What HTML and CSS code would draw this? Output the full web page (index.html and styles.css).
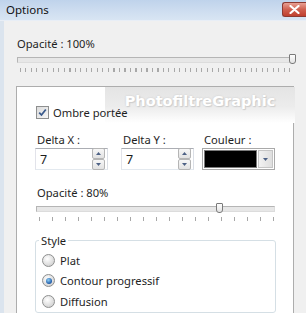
FILE: index.html
```html
<!DOCTYPE html>
<html lang="fr">
<head>
<meta charset="utf-8">
<link rel="stylesheet" href="styles.css">
</head>
<body>
<div class="window">
  <div class="titlebar">
    <span class="title">Options</span>
    <span class="close"><svg width="11" height="9" viewBox="0 0 11 9"><path d="M1.5 1 L9.5 8 M9.5 1 L1.5 8" stroke="#fff" stroke-width="2.2" stroke-linecap="round"/></svg></span>
  </div>
  <div class="client">
    <div class="label">Opacité : 100%</div>
    <div class="slider wide">
      <div class="track"></div>
      <div class="thumb" style="left: 272px"></div>
    </div>
    <div class="ticks fine"></div>

    <div class="panel">
      <div class="watermark">PhotofiltreGraphic</div>
      <label class="check-row">
        <span class="checkbox"><svg width="9" height="9" viewBox="0 0 9 9"><path d="M1.2 4.6 L3.5 7 L7.8 1.5" fill="none" stroke="#3a5a8c" stroke-width="1.8"/></svg></span>
        <span>Ombre portée</span>
      </label>

      <div class="fields">
        <div class="field">
          <div class="flabel">Delta X :</div>
          <div class="spin">
            <span class="val">7</span>
            <span class="spinbtns">
              <span class="sbtn"><svg width="5" height="3" viewBox="0 0 5 3"><path d="M0 3 L2.5 0 L5 3Z" fill="#4d6185"/></svg></span>
              <span class="sbtn"><svg width="5" height="3" viewBox="0 0 5 3"><path d="M0 0 L2.5 3 L5 0Z" fill="#4d6185"/></svg></span>
            </span>
          </div>
        </div>
        <div class="field">
          <div class="flabel">Delta Y :</div>
          <div class="spin">
            <span class="val">7</span>
            <span class="spinbtns">
              <span class="sbtn"><svg width="5" height="3" viewBox="0 0 5 3"><path d="M0 3 L2.5 0 L5 3Z" fill="#4d6185"/></svg></span>
              <span class="sbtn"><svg width="5" height="3" viewBox="0 0 5 3"><path d="M0 0 L2.5 3 L5 0Z" fill="#4d6185"/></svg></span>
            </span>
          </div>
        </div>
        <div class="field">
          <div class="flabel">Couleur :</div>
          <div class="color">
            <span class="swatch"></span>
            <span class="drop"><svg width="5" height="3" viewBox="0 0 5 3"><path d="M0 0 L2.5 3 L5 0Z" fill="#4d6185"/></svg></span>
          </div>
        </div>
      </div>

      <div class="label inner">Opacité : 80%</div>
      <div class="slider short">
        <div class="track"></div>
        <div class="thumb" style="left: 180px"></div>
      </div>
      <div class="ticks coarse"></div>

      <fieldset class="group">
        <legend>Style</legend>
        <div class="radio-row"><span class="radio"></span><span>Plat</span></div>
        <div class="radio-row"><span class="radio on"></span><span>Contour progressif</span></div>
        <div class="radio-row"><span class="radio"></span><span>Diffusion</span></div>
      </fieldset>
    </div>
  </div>
</div>
</body>
</html>
```
FILE: styles.css
```css
html, body {
  margin: 0;
  padding: 0;
}
body {
  width: 306px;
  height: 313px;
  overflow: hidden;
  background: #f0f0f0;
  font-family: "Noto Sans", "Open Sans", sans-serif;
  font-size: 11.2px;
  color: #1e1e1e;
}
.window {
  display: flex;
  flex-direction: column;
  height: 313px;
}
.titlebar {
  height: 20px;
  display: flex;
  align-items: center;
  padding-left: 6px;
  background: linear-gradient(#bfd3eb, #cfdef0 60%, #d8e5f3);
  border-bottom: 1px solid #e8eef6;
}
.title {
  font-size: 11.5px;
  color: #111;
  line-height: 20px;
}
.close {
  margin-left: auto;
  margin-top: -2px;
  width: 23px;
  height: 13px;
  display: flex;
  align-items: center;
  justify-content: center;
  border: 1px solid #8d3a32;
  border-right: none;
  border-radius: 3px 0 0 3px;
  background: linear-gradient(#e8a093, #d0604f 50%, #c0402f);
}
.client {
  flex: 1;
  border-left: 4px solid #dbe4ee;
  padding: 15px 0 0 13px;
  display: flex;
  flex-direction: column;
}
.label {
  line-height: 15px;
  height: 15px;
}
.slider {
  position: relative;
  height: 11px;
  display: flex;
  align-items: center;
}
.slider.wide {
  width: 277px;
  margin-top: 3px;
}
.slider.short {
  width: 239px;
  margin-top: 3px;
}
.track {
  flex: 1;
  height: 4px;
  border: 1px solid #b5b5b5;
  border-bottom-color: #dcdcdc;
  border-right-color: #dcdcdc;
  background: #e7e7e7;
}
.thumb {
  position: absolute;
  top: 0;
  width: 5px;
  height: 8px;
  border: 1px solid #7a7a7a;
  border-radius: 1px 1px 3px 3px;
  background: linear-gradient(#fdfdfd, #e3e3e3);
}
.ticks {
  height: 4px;
  margin-top: 3px;
}
.ticks.fine {
  width: 274px;
  margin-left: 3px;
  background: repeating-linear-gradient(to right, #a8a8a8 0 1px, transparent 1px 5.5px);
}
.ticks.coarse {
  width: 236px;
  margin-left: 3px;
  background: repeating-linear-gradient(to right, #a8a8a8 0 1px, transparent 1px 13px);
}
.panel {
  position: relative;
  margin-top: 14px;
  margin-left: -1px;
  width: 278px;
  flex: 1;
  background: #fff;
  border: 1px solid #adadad;
  border-bottom: none;
  padding: 18px 0 0 19px;
  box-sizing: border-box;
  display: flex;
  flex-direction: column;
}
.watermark {
  position: absolute;
  left: 88px;
  top: 0;
  width: 190px;
  height: 36px;
  background: linear-gradient(#e4e4e4, #ececec 55%, #ffffff);
  color: #fff;
  font-family: "DejaVu Sans", sans-serif;
  font-weight: bold;
  font-size: 14.5px;
  letter-spacing: 0;
  line-height: 22px;
  text-align: center;
  padding-top: 3px;
  box-sizing: border-box;
  text-shadow: 0 0 2px #c8c8c8, 1px 1px 1px #cfcfcf;
}
.check-row {
  position: relative;
  display: flex;
  align-items: center;
  gap: 4px;
  line-height: 15px;
  height: 15px;
}
.checkbox {
  width: 11px;
  height: 11px;
  border: 1px solid #8e8f8f;
  background: linear-gradient(135deg, #dcdcdc, #f6f6f6);
  display: flex;
  align-items: center;
  justify-content: center;
}
.fields {
  display: flex;
  margin-top: 12px;
  margin-left: -1px;
}
.field {
  display: flex;
  flex-direction: column;
}
.field:nth-child(1) { width: 86px; }
.field:nth-child(2) { width: 81px; }
.flabel {
  line-height: 15px;
  height: 15px;
  padding-left: 2px;
}
.spin {
  margin-top: 1px;
  width: 73px;
  height: 22px;
  box-sizing: border-box;
  border: 1px solid #abadb3;
  border-left-color: #e2e3ea;
  border-right-color: #dbdfe6;
  border-bottom-color: #e3e9ef;
  background: #fff;
  display: flex;
  align-items: center;
  padding-left: 4px;
}
.val {
  flex: 1;
  font-size: 12.5px;
}
.spinbtns {
  display: flex;
  flex-direction: column;
  gap: 0;
  margin-right: 2px;
}
.sbtn {
  width: 11px;
  height: 9px;
  border: 1px solid #b5b5b5;
  border-radius: 2px;
  background: linear-gradient(#f7f7f7, #e2e2e2);
  display: flex;
  align-items: center;
  justify-content: center;
}
.color {
  margin-top: 1px;
  width: 73px;
  height: 22px;
  box-sizing: border-box;
  border: 1px solid #a9a9a9;
  padding: 1px;
  display: flex;
  gap: 1px;
  background: #fff;
}
.swatch {
  flex: 1;
  background: #000;
  border: 1px solid #7a7a7a;
}
.drop {
  width: 13px;
  display: flex;
  align-items: center;
  justify-content: center;
  border: 1px solid #c5c5c5;
  background: linear-gradient(to right, #f2f2f2, #dedede);
}
.label.inner {
  margin-top: 15px;
  padding-left: 1px;
}
.group {
  margin: 12px 0 0 -1px;
  width: 241px;
  box-sizing: border-box;
  border: 1px solid #d5dfe5;
  border-radius: 3px;
  padding: 2px 0 0 6px;
}
.group legend {
  padding: 0 2px;
  margin-left: -3px;
  line-height: 15px;
}
.radio-row {
  display: flex;
  align-items: center;
  gap: 5px;
  height: 20.5px;
}
.radio {
  width: 11px;
  height: 11px;
  border-radius: 50%;
  border: 1px solid #8e8f8f;
  background: radial-gradient(circle at 40% 35%, #ffffff, #d2d2d2 80%);
  position: relative;
}
.radio.on::after {
  content: "";
  position: absolute;
  left: 2.5px;
  top: 2.5px;
  width: 6px;
  height: 6px;
  border-radius: 50%;
  background: radial-gradient(circle at 40% 35%, #8fd0f5, #1f5aa8 70%, #173c78);
}
```
